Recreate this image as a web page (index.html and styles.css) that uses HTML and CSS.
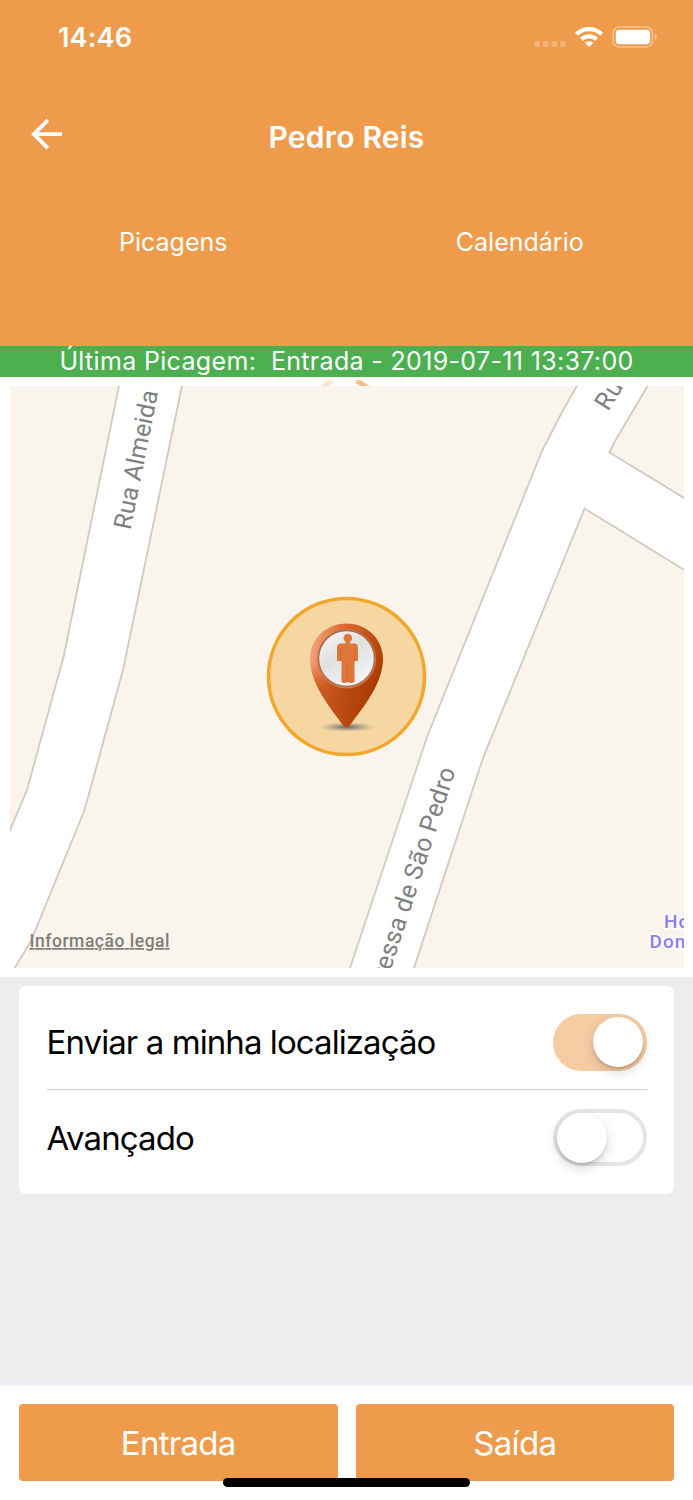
FILE: index.html
```html
<!DOCTYPE html>
<html lang="pt">
<head>
    <meta charset="UTF-8">
    <meta name="viewport" content="width=device-width, initial-scale=1.0">
    <title>Pedro Reis</title>
    <link rel="stylesheet" href="styles.css">
</head>
<body>

<header class="header">
    <div class="status-bar">
        <span class="clock">14:46</span>
        <svg class="status-icons" width="124" height="24" viewBox="534 25 124 24">
            <g fill="#fff" fill-opacity="0.25">
                <rect x="534.3" y="41.3" width="5.8" height="5.8" rx="1.8"/>
                <rect x="542.8" y="41.3" width="5.8" height="5.8" rx="1.8"/>
                <rect x="551.4" y="41.3" width="5.8" height="5.8" rx="1.8"/>
                <rect x="560" y="41.3" width="5.8" height="5.8" rx="1.8"/>
            </g>
            <g fill="none" stroke="#fff" stroke-width="4.300">
                <path d="M576.500 34.200A18.300 18.300 0 0 1 601.700 34.200"/>
                <path d="M581.600 39.400A11 11 0 0 1 596.600 39.400"/>
            </g>
            <path d="M589.100 47L584.900 42.800A6.200 6.200 0 0 1 593.300 42.800Z" fill="#fff"/>
            <rect x="613.200" y="27" width="39.200" height="20" rx="6" fill="none" stroke="#fff" stroke-opacity="0.4" stroke-width="1.700"/>
            <rect x="615.800" y="29.800" width="34.200" height="14.400" rx="3.400" fill="#fff"/>
            <path d="M654.800 33.600a4.300 4.300 0 0 1 0 7.200z" fill="#fff" fill-opacity="0.5"/>
        </svg>
    </div>

    <div class="title-bar">
        <svg class="back" width="32" height="32" viewBox="0 0 32 32">
            <path d="M16.800 2.200L2.800 16.200L16.800 30.200M3.500 16.200H31" fill="none" stroke="#fff" stroke-width="3.800"/>
        </svg>
        <h1>Pedro Reis</h1>
    </div>

    <nav class="tabs">
        <a class="tab">Picagens</a>
        <a class="tab">Calendário</a>
    </nav>
</header>

<div class="last-entry">Última Picagem:&nbsp; Entrada - 2019-07-11 13:37:00</div>

<div class="map-wrap">
    <svg class="map-top" width="674" height="9" viewBox="10 377 674 9">
        <path d="M318 387L328 380.500Q333 378.500 333 383L327 387Z" fill="#fbe3cf"/>
        <path d="M371 387L361 380.500Q355.500 378.500 355.500 383L361.500 387Z" fill="#f5bf8c"/>
    </svg>
    <svg class="map" width="674" height="582" viewBox="10 386 674 582">
        <defs>
            <linearGradient id="pin" x1="0" y1="0.1" x2="1" y2="0.4">
                <stop offset="0" stop-color="#f9a987"/>
                <stop offset="0.4" stop-color="#db6a33"/>
                <stop offset="1" stop-color="#b03f04"/>
            </linearGradient>
            <linearGradient id="pinTip" x1="0" y1="0" x2="1" y2="0.1">
                <stop offset="0" stop-color="#d9662b"/>
                <stop offset="0.5" stop-color="#bb4c12"/>
                <stop offset="1" stop-color="#a63802"/>
            </linearGradient>
            <linearGradient id="pinFade" x1="0" y1="0" x2="0" y2="1">
                <stop offset="0.4" stop-color="#fff" stop-opacity="0"/>
                <stop offset="0.62" stop-color="#fff"/>
            </linearGradient>
            <mask id="pinMask" maskContentUnits="objectBoundingBox">
                <rect width="1" height="1" fill="url(#pinFade)"/>
            </mask>
            <linearGradient id="disc" x1="0" y1="0" x2="0.6" y2="1">
                <stop offset="0" stop-color="#fafafa"/>
                <stop offset="0.5" stop-color="#e0e0e0"/>
                <stop offset="1" stop-color="#f4f4f4"/>
            </linearGradient>
            <radialGradient id="shadow">
                <stop offset="0" stop-color="#555" stop-opacity="0.9"/>
                <stop offset="0.5" stop-color="#777" stop-opacity="0.5"/>
                <stop offset="1" stop-color="#999" stop-opacity="0"/>
            </radialGradient>
        </defs>

        <rect x="10" y="386" width="674" height="582" fill="#f9f5ed"/>

        <!-- ruas -->
        <g fill="#fff" stroke="#d3c9be" stroke-width="1.8">
            <path d="M121 376L64 655L27 790L5 842V984L31 941L84.500 810L123 670L184 376Z"/>
            <path d="M582.500 376L561.500 413L542 451L427 737L347 977H411L483 758L584.500 508.500L690 573.500V501.500L609.500 452.500L614.500 442L653.500 376Z"/>
        </g>

        <g class="street">
            <text transform="translate(130.500 530.500) rotate(-78.700)" textLength="142">Rua Almeida</text>
            <text transform="translate(608 412) rotate(-58)">Ru</text>
            <text transform="translate(388 979) rotate(-72)" textLength="220">ressa de São Pedro</text>
        </g>
        <g class="poi">
            <text x="664" y="928">Ho</text>
            <text x="649.500" y="948">Don</text>
        </g>
        <text class="legal" x="29.500" y="947" textLength="140">Informação legal</text>

        <circle cx="346.500" cy="676.500" r="78" fill="#f6d7a1" stroke="#f2a72c" stroke-width="3.600"/>

        <!-- marcador -->
        <ellipse cx="347" cy="727" rx="29" ry="5" fill="url(#shadow)"/>
        <path d="M346.500 623.500C367 623.500 383 639 383 659C383 682 365 705 350 725Q346.500 729.500 343 725C328 705 310 682 310 659C310 639 326 623.500 346.500 623.500Z" fill="url(#pin)"/>
        <path d="M346.500 623.500C367 623.500 383 639 383 659C383 682 365 705 350 725Q346.500 729.500 343 725C328 705 310 682 310 659C310 639 326 623.500 346.500 623.500Z" fill="url(#pinTip)" mask="url(#pinMask)"/>
        <circle cx="346.500" cy="659" r="29.500" fill="#e27a40"/>
        <circle cx="346.500" cy="658.500" r="28" fill="url(#disc)" stroke="#a06f55" stroke-width="1.400"/>
        <g fill="#dd7638">
            <circle cx="347.800" cy="638" r="4.300"/>
            <path d="M345.500 641H350V643.500H355Q358 644 358 648V661H354.500V682Q351 684 347.500 682Q344 684 341.500 682V661H337V648Q337 644 340.500 643.500H345.500Z"/>
        </g>
        <path d="M340.800 648V661M354.700 648V661M347.500 664V682" stroke="#c86a34" stroke-width="0.800"/>
    </svg>
</div>

<main class="content">
    <div class="card">
        <div class="row">
            <span class="label">Enviar a minha localização</span>
            <span class="switch on"><span class="knob"></span></span>
        </div>
        <div class="row">
            <span class="label">Avançado</span>
            <span class="switch"><span class="knob"></span></span>
        </div>
    </div>
</main>

<footer class="footer">
    <button class="btn">Entrada</button>
    <button class="btn">Saída</button>
    <div class="home-indicator"></div>
</footer>

</body>
</html>
```
FILE: styles.css
```css
* {
    box-sizing: border-box;
    margin: 0;
    padding: 0;
}
body {
    font-family: Inter, 'Liberation Sans', sans-serif;
    background-color: #ededed;
    width: 693px;
    height: 1500px;
    display: flex;
    flex-direction: column;
    overflow: hidden;
}
svg {
    display: block;
}
.header {
    height: 346px;
    background-color: #ee9c4c;
    color: white;
}
.status-bar {
    height: 74px;
    padding: 0 35px 0 58px;
    display: flex;
    justify-content: space-between;
    align-items: center;
}
.clock {
    font-size: 27px;
    font-weight: 600;
    letter-spacing: 0.2px;
}
.title-bar {
    height: 120px;
    padding: 0 31px;
    display: grid;
    grid-template-columns: 32px 1fr 32px;
    align-items: center;
}
h1 {
    font-size: 30px;
    font-weight: 600;
    letter-spacing: 0.2px;
    text-align: center;
    padding-top: 5px;
}
.tabs {
    display: flex;
    height: 96px;
    align-items: center;
}
.tab {
    flex: 1;
    text-align: center;
    font-size: 25px;
}
.last-entry {
    height: 31px;
    line-height: 31px;
    background-color: #4caf50;
    color: white;
    font-size: 25px;
    letter-spacing: 0.33px;
    text-align: center;
    white-space: nowrap;
}
.map-wrap {
    height: 600px;
    background-color: white;
    padding: 0 9.5px;
}
.street {
    font-family: Roboto, sans-serif;
    font-size: 25px;
    letter-spacing: 0.7px;
    fill: #808080;
}
.poi {
    font-family: Roboto, sans-serif;
    font-size: 19px;
    font-weight: 500;
    letter-spacing: 1px;
    fill: #8b7cf0;
    stroke: white;
    stroke-width: 3px;
    paint-order: stroke;
}
.legal {
    font-family: Roboto, sans-serif;
    font-size: 17.5px;
    font-weight: 500;
    fill: #807d79;
    text-decoration: underline;
}
.content {
    flex: 1;
    padding: 9px 19px;
    border-bottom: 6px solid #efeef4;
}
.card {
    height: 208px;
    background-color: white;
    border-radius: 7px;
    padding: 8px 27.5px;
}
.row {
    height: 95px;
    padding-top: 1px;
    display: flex;
    justify-content: space-between;
    align-items: center;
    color: black;
}
.row + .row {
    border-top: 1px solid #d0d0d0;
}
.label {
    font-size: 33px;
    letter-spacing: -0.92px;
}
.switch {
    width: 94px;
    height: 57px;
    border: 4px solid #e5e5e5;
    border-radius: 29px;
    display: flex;
    align-items: center;
}
.switch.on {
    background-color: #f6cca3;
    border-color: #f6cca3;
    justify-content: flex-end;
}
.knob {
    width: 50px;
    height: 50px;
    border-radius: 50%;
    background-color: white;
    box-shadow: 0 5px 12px rgba(0, 0, 0, 0.16), 0 2px 2px rgba(0, 0, 0, 0.12);
}
.footer {
    height: 114px;
    background-color: white;
    padding: 18px 19px;
    display: flex;
    gap: 18px;
    align-items: flex-start;
    position: relative;
}
.btn {
    flex: 1;
    height: 77px;
    border: none;
    border-radius: 4px;
    background-color: #ee9c4c;
    color: white;
    font-family: inherit;
    font-size: 33px;
    letter-spacing: -0.7px;
}
.home-indicator {
    position: absolute;
    left: 223px;
    bottom: 13.5px;
    width: 247px;
    height: 8.5px;
    border-radius: 5px;
    background-color: black;
}
```
